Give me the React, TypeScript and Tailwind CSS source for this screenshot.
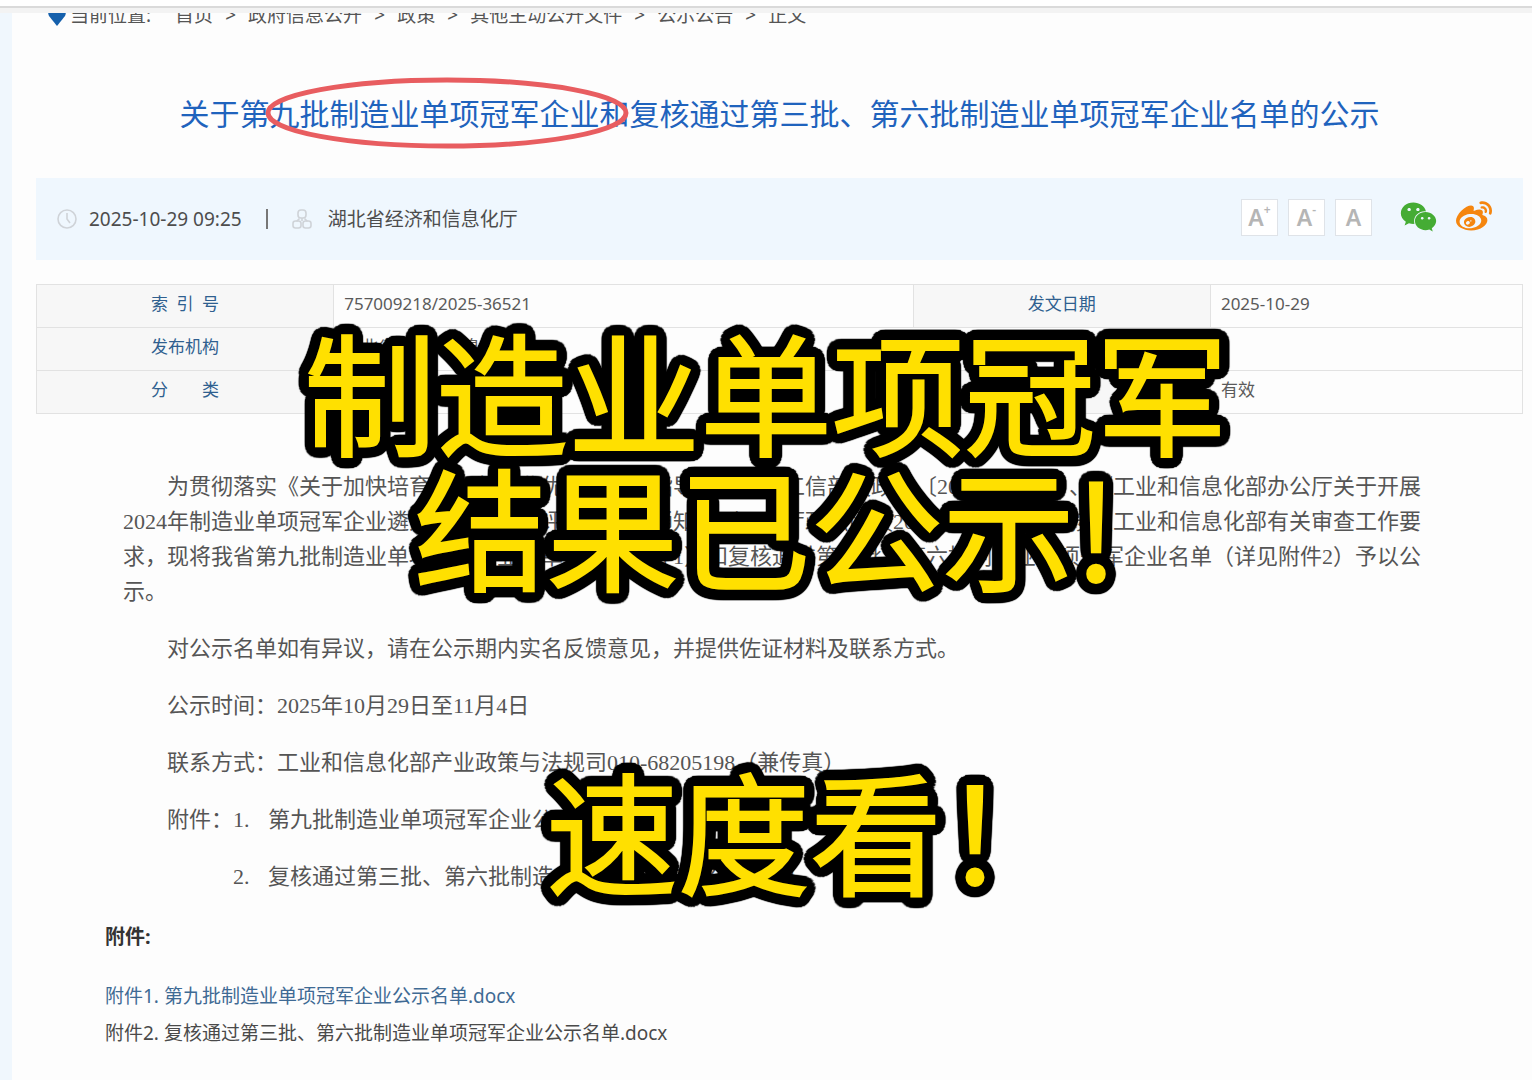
import * as React from "react"
import { FaWeibo, FaWeixin } from "react-icons/fa"

const crumbs = ["首页", "政府信息公开", "政策", "其他主动公开文件", "公示公告", "正文"]

const sans = "font-['Noto_Sans','Noto_Sans_CJK_SC',sans-serif]"
const serif = "font-['Liberation_Serif','Noto_Sans_CJK_SC',sans-serif]"

// Ring of hard shadows, gives the caption a black outline with round corners
const outline = Array.from({ length: 48 }, (_, i) => {
  const angle = (i / 48) * Math.PI * 2
  return `${(Math.cos(angle) * 11).toFixed(1)}px ${(Math.sin(angle) * 11).toFixed(1)}px 1px #000`
})
  .concat("5px 0 0 #000", "-5px 0 0 #000", "0 5px 0 #000", "0 -5px 0 #000")
  .join(", ")

function Breadcrumb() {
  return (
    <nav aria-label="当前位置" className="flex h-[14px] items-end overflow-hidden pl-3 text-[19px] leading-[26px] text-[#555]">
      <svg viewBox="0 0 18 24" className="mr-1 h-6 w-[18px] shrink-0" aria-hidden="true">
        <path d="M9 23 1 13C-2 6 3 0 9 0s11 6 8 13z" fill="#1560ac" />
      </svg>
      <span className="mr-6 -mb-px shrink-0">当前位置:</span>
      <ol className="-mb-px flex shrink-0">
        {crumbs.map((item, i) => (
          <li key={item} className="flex">
            {i > 0 && <span className="w-[35px] text-center">&gt;</span>}
            <a href="#">{item}</a>
          </li>
        ))}
      </ol>
    </nav>
  )
}

function ClockIcon() {
  return (
    <svg viewBox="0 0 20 20" className="size-5 shrink-0" fill="none" stroke="#cfd3d8" strokeWidth="1.6" aria-hidden="true">
      <circle cx="10" cy="10" r="9" />
      <path d="M10 4v6l3 4" />
    </svg>
  )
}

function OrgIcon() {
  return (
    <svg viewBox="0 0 20 20" className="size-5 shrink-0" fill="none" stroke="#cfd3d8" strokeWidth="1.6" aria-hidden="true">
      <rect x="6" y="1" width="8" height="8" rx="3" />
      <path d="M10 9v3M4.500 12.500 7.500 9.500M15.500 12.500 12.500 9.500" />
      <rect x="1" y="12" width="8" height="7" rx="2.500" />
      <rect x="11" y="12" width="8" height="7" rx="2.500" />
    </svg>
  )
}

function FontButton({ sign, label }: { sign: string; label: string }) {
  return (
    <button
      type="button"
      aria-label={label}
      className="flex size-[37px] items-center justify-center border border-[#dfe3e8] bg-white text-[23px] leading-none font-semibold text-[#b5b5b5]"
    >
      A{sign && <span className="self-start pt-1 text-[12px]">{sign}</span>}
    </button>
  )
}

function MetaBar() {
  return (
    <div className="mt-[27px] flex h-[82px] items-center justify-between bg-[#eff7fe] pr-[30px] pl-[21px] text-[#4d4d4d]">
      <div className="flex items-center">
        <ClockIcon />
        <time className="ml-3 text-[19px]">2025-10-29 09:25</time>
        <span className="mx-6 h-5 w-[2px] bg-[#777]" />
        <OrgIcon />
        <span className="ml-4 text-[19px]">湖北省经济和信息化厅</span>
      </div>
      <div className="flex items-center gap-[10px] pb-1">
        <FontButton sign="+" label="放大字体" />
        <FontButton sign="-" label="缩小字体" />
        <FontButton sign="" label="默认字体" />
        <a href="#" aria-label="微信" className="ml-[18px] text-[#45ac34]">
          <FaWeixin className="h-[34px] w-[37px]" />
        </a>
        <a href="#" aria-label="微博" className="ml-2 text-[#f5860f]">
          <FaWeibo className="h-[36px] w-[38px]" />
        </a>
      </div>
    </div>
  )
}

function InfoTable() {
  const th = "border border-[#e2e2e2] bg-[#f7f7f7] pb-1 font-normal text-[#2f5f8f]"
  const td = "border border-[#e2e2e2] px-[10px] pb-1"
  return (
    <table className="mt-6 w-full table-fixed border-collapse text-[17px] leading-6 text-[#5a5a5a]">
      <colgroup>
        <col className="w-[20%]" />
        <col className="w-[39%]" />
        <col className="w-[20%]" />
        <col className="w-[21%]" />
      </colgroup>
      <tbody>
        <tr className="h-[43px]">
          <th scope="row" className={th}>
            <span className="inline-flex w-[68px] justify-between"><span>索</span><span>引</span><span>号</span></span>
          </th>
          <td className={td}>757009218/2025-36521</td>
          <th scope="row" className={th}>发文日期</th>
          <td className={td}>2025-10-29</td>
        </tr>
        <tr className="h-[43px]">
          <th scope="row" className={th}>发布机构</th>
          <td colSpan={3} className={td}>湖北省经济和信息化厅</td>
        </tr>
        <tr className="h-[43px]">
          <th scope="row" className={th}>
            <span className="inline-flex w-[68px] justify-between"><span>分</span><span>类</span></span>
          </th>
          <td className={td}></td>
          <th scope="row" className={th}>有效性</th>
          <td className={td}>有效</td>
        </tr>
      </tbody>
    </table>
  )
}

function Article() {
  return (
    <article className={`${serif} mt-[55px] flex flex-col gap-[22px] pr-[88px] pl-[87px] text-[22px] leading-[35px] text-[#555] [text-spacing-trim:space-all]`}>
      <p className="indent-11">
        为贯彻落实《关于加快培育发展制造业优质企业的指导意见》（工信部联政法〔2021〕70号）、《工业和信息化部办公厅关于开展
        <br />
        2024年制造业单项冠军企业遴选认定和复核评价工作的通知》（工信厅政法函〔2024〕号）要求，按照工业和信息化部有关审查工作要
        <br />
        求，现将我省第九批制造业单项冠军企业名单（详见附件1）和复核通过第三批、第六批制造业单项冠军企业名单（详见附件2）予以公示。
      </p>
      <p className="indent-11">对公示名单如有异议，请在公示期内实名反馈意见，并提供佐证材料及联系方式。</p>
      <p className="indent-11">公示时间：2025年10月29日至11月4日</p>
      <p className="indent-11">联系方式：工业和信息化部产业政策与法规司010-68205198（兼传真）</p>
      <div className="flex pl-11">
        <span>附件：</span>
        <ol className="flex flex-col gap-[22px]">
          <li className="flex"><span className="w-[35px]">1.</span>第九批制造业单项冠军企业公示名单</li>
          <li className="flex"><span className="w-[35px]">2.</span>复核通过第三批、第六批制造业单项冠军企业公示名单</li>
        </ol>
      </div>
    </article>
  )
}

function Attachments() {
  return (
    <section className="mt-[24px] pl-[69px] text-[19px] leading-[37px] text-[#4a4a4a]">
      <h2 className="text-[20px] font-bold text-[#333]">附件:</h2>
      <ul className="mt-[23px]">
        <li><a href="#" className="text-[#3f6a94]">附件1. 第九批制造业单项冠军企业公示名单.docx</a></li>
        <li><a href="#">附件2. 复核通过第三批、第六批制造业单项冠军企业公示名单.docx</a></li>
      </ul>
    </section>
  )
}

// Big yellow caption laid over the page
function Caption() {
  return (
    <div
      className="pointer-events-none absolute inset-x-0 top-[321px] text-center font-['Noto_Sans_CJK_SC',sans-serif] text-[132px] leading-[135px] font-normal whitespace-nowrap text-[#ffe000] [-webkit-text-stroke:2px_#ffe000]"
      style={{ textShadow: outline }}
    >
      <p>制造业单项冠军</p>
      <p>结果已公示!</p>
      <p className="mt-[169px] pl-[88px]">速度看！</p>
    </div>
  )
}

export default function App() {
  return (
    <div className={`${sans} relative min-h-screen overflow-hidden bg-[#fdfdfd]`}>
      <div className="h-[13px] border-t-[6px] border-white bg-[#f3f3f3]">
        <div className="h-[2px] bg-[#dadada]" />
      </div>
      <div className="bg-[#f0f7fd] pl-3">
        <main className="min-h-[1067px] bg-[#fdfdfd] pr-[9px] pl-6">
          <Breadcrumb />
          <div className="relative mt-[50px] flex h-[74px] items-center justify-center">
            <h1 className="text-[30px] leading-[40px] text-[#1f63bd]">
              关于第九批制造业单项冠军企业和复核通过第三批、第六批制造业单项冠军企业名单的公示
            </h1>
            <svg viewBox="0 0 364 72" className="absolute top-0 left-[229px] h-[72px] w-[364px]" fill="none" aria-hidden="true">
              <ellipse cx="182" cy="36" rx="179" ry="33" stroke="#e85d60" strokeWidth="5" />
            </svg>
          </div>
          <MetaBar />
          <InfoTable />
          <Article />
          <Attachments />
        </main>
      </div>
      <Caption />
    </div>
  )
}
